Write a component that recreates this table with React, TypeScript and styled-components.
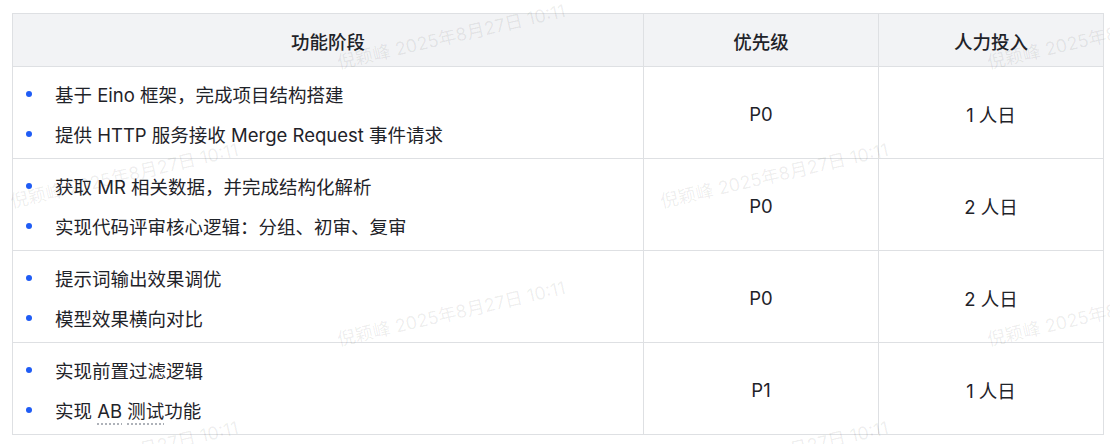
import { Fragment } from 'react';
import styled, { createGlobalStyle } from 'styled-components';

const GlobalStyle = createGlobalStyle`
  html, body {
    margin: 0;
    padding: 0;
    background: #ffffff;
  }
  body {
    font-family: Inter, "Noto Sans CJK SC", sans-serif;
    color: #1f2329;
  }
`;

const Page = styled.div`
  position: relative;
  width: 1110px;
  height: 444px;
  overflow: hidden;
  padding: 13px 0 0 12px;
  box-sizing: border-box;
`;

const Table = styled.div`
  display: grid;
  grid-template-columns: 631px 235px 225px;
  grid-auto-rows: 92px;
  grid-template-rows: 53px;
  border-top: 1px solid #dee0e3;
  border-left: 1px solid #dee0e3;
  width: 1092px;
  box-sizing: border-box;
`;

const HeadCell = styled.div`
  display: flex;
  align-items: center;
  justify-content: center;
  background: #f2f3f5;
  border-right: 1px solid #dee0e3;
  border-bottom: 1px solid #dee0e3;
  box-sizing: border-box;
  font-size: 18.5px;
  font-weight: 500;
  padding-top: 2px;
`;

const Cell = styled.div<{ $list?: boolean }>`
  display: flex;
  flex-direction: column;
  justify-content: center;
  align-items: ${({ $list }) => ($list ? 'stretch' : 'center')};
  padding: ${({ $list }) => ($list ? '2px 0 0 13px' : '2px 0 0 0')};
  border-right: 1px solid #dee0e3;
  border-bottom: 1px solid #dee0e3;
  box-sizing: border-box;
  font-size: 18.5px;
`;

const Item = styled.div`
  display: flex;
  align-items: center;
  height: 40px;
  white-space: nowrap;
`;

const Dot = styled.span`
  width: 6px;
  height: 6px;
  border-radius: 50%;
  background: #1f5cf5;
  margin-right: 23px;
  flex-shrink: 0;
`;

const Marked = styled.span`
  text-decoration: underline dotted #a8adb4;
  text-underline-offset: 6px;
`;

const Watermark = styled.div<{ $x: number; $y: number }>`
  position: absolute;
  left: ${({ $x }) => $x}px;
  top: ${({ $y }) => $y - 20}px;
  line-height: 20px;
  font-size: 18px;
  color: rgba(0, 0, 0, 0.075);
  white-space: nowrap;
  transform: rotate(-13deg);
  transform-origin: 0 100%;
  pointer-events: none;
`;

const rows = [
  {
    items: [<>基于 Eino 框架，完成项目结构搭建</>, <>提供 HTTP 服务接收 Merge Request 事件请求</>],
    priority: 'P0',
    effort: '1 人日',
  },
  {
    items: [<>获取 MR 相关数据，并完成结构化解析</>, <>实现代码评审核心逻辑：分组、初审、复审</>],
    priority: 'P0',
    effort: '2 人日',
  },
  {
    items: [<>提示词输出效果调优</>, <>模型效果横向对比</>],
    priority: 'P0',
    effort: '2 人日',
  },
  {
    items: [
      <>实现前置过滤逻辑</>,
      <>
        实现 <Marked>AB</Marked> <Marked>测试</Marked>功能
      </>,
    ],
    priority: 'P1',
    effort: '1 人日',
  },
];

// watermark tiles, staggered
const marks = [
  { x: 340, y: 73 },
  { x: 990, y: 73 },
  { x: 13, y: 212 },
  { x: 663, y: 212 },
  { x: 340, y: 350 },
  { x: 990, y: 350 },
  { x: 13, y: 490 },
  { x: 663, y: 490 },
];

const App = () => {
  return (
    <>
      <GlobalStyle />
      <Page>
        <Table>
          <HeadCell>功能阶段</HeadCell>
          <HeadCell>优先级</HeadCell>
          <HeadCell>人力投入</HeadCell>
          {rows.map((row, i) => (
            <Fragment key={i}>
              <Cell $list>
                {row.items.map((item, j) => (
                  <Item key={j}>
                    <Dot />
                    <span>{item}</span>
                  </Item>
                ))}
              </Cell>
              <Cell>{row.priority}</Cell>
              <Cell>{row.effort}</Cell>
            </Fragment>
          ))}
        </Table>
        {marks.map((m, i) => (
          <Watermark key={i} $x={m.x} $y={m.y}>
            倪颖峰 2025年8月27日 10:11
          </Watermark>
        ))}
      </Page>
    </>
  );
};

export default App;
